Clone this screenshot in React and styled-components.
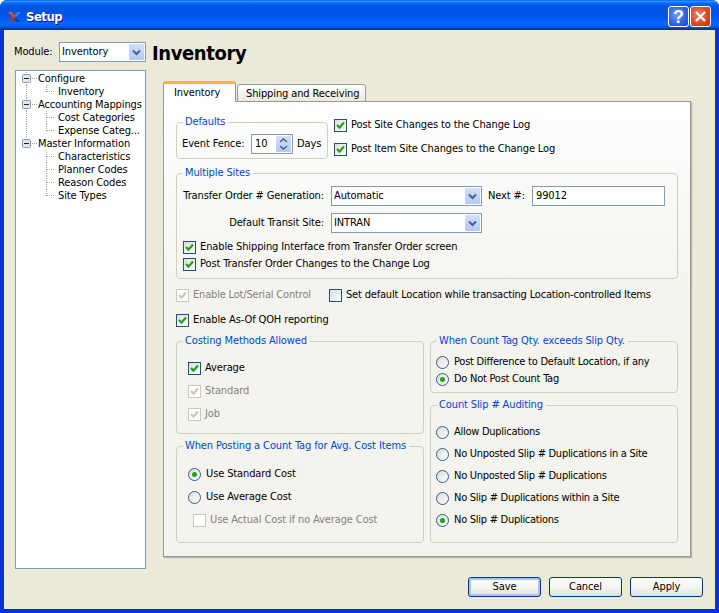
import styled, { createGlobalStyle } from "styled-components";

const GlobalStyle = createGlobalStyle`
	html, body {
		margin: 0;
		padding: 0;
		background: #fff;
	}
	* {
		box-sizing: border-box;
	}
`;

const UI_FONT = `"DejaVu Sans Condensed", "DejaVu Sans", sans-serif`;

// Small drawings
const Chevron = () => (
	<svg width="9" height="7" viewBox="0 0 9 7">
		<path d="M1 1.5 L4.5 5 L8 1.5" fill="none" stroke="#4d6185" strokeWidth="2" />
	</svg>
);

const Tick = ({ color }) => (
	<svg width="11" height="11" viewBox="0 0 11 11">
		<path d="M2 5 L4.5 7.6 L9 2.6" fill="none" stroke={color} strokeWidth="2.2" />
	</svg>
);

const Logo = () => (
	<svg width="13" height="10" viewBox="0 0 13 10">
		<path d="M0 0 H4 L7.5 4.5 L5.5 6 Z" fill="#e0501f" />
		<path d="M0 10 L5 5 L7 6.5 L4 10 Z" fill="#b8321c" />
		<path d="M13 0 H9 L6.5 3.5 L8.5 5 Z" fill="#3f7fd6" />
		<path d="M7.5 5.5 L12.5 10 H8.5 L6 7 Z" fill="#173f94" />
	</svg>
);

const CloseCross = () => (
	<svg width="13" height="13" viewBox="0 0 13 13">
		<path d="M2 2 L11 11 M11 2 L2 11" fill="none" stroke="#fff" strokeWidth="2.2" />
	</svg>
);

const TreeLines = ({ root, parentLast, last, width }) => (
	<svg width={width} height="13" viewBox={`0 0 ${width} 13`}>
		<g stroke="#a9a793" strokeDasharray="1 1" fill="none">
			{!parentLast && <path d="M10.5 0 V13" />}
			{root ? (
				<path d="M16 6.5 H22" />
			) : (
				<path d={`M30.5 0 V${last ? 7 : 13} M31 6.5 H39`} />
			)}
		</g>
		{root && (
			<g>
				<rect x="6.5" y="2.5" width="8" height="8" rx="1" fill="#e4e6ee" stroke="#7f9db9" />
				<path d="M8 6.5 H13" stroke="#222" />
			</g>
		)}
	</svg>
);

// Window frame
const Window = styled.div`
	width: 719px;
	height: 613px;
	overflow: hidden;
	display: flex;
	flex-direction: column;
	font: 11px/14px ${UI_FONT};
	letter-spacing: -0.12px;
	color: #000;
	background: #0831d9;
	border-radius: 7px 7px 0 0;
`;

const TitleBar = styled.div`
	height: 30px;
	flex: none;
	display: flex;
	align-items: center;
	padding: 3px 8px 0 8px;
	background: linear-gradient(
		180deg,
		#0058ee 0%,
		#3593ff 4%,
		#288eff 6%,
		#127dff 8%,
		#036ffc 10%,
		#0262ee 14%,
		#0057e5 20%,
		#0054e3 24%,
		#0055eb 56%,
		#005bf5 66%,
		#026afe 76%,
		#0062ef 86%,
		#0052d6 92%,
		#0040ab 94%,
		#003092 100%
	);
`;

const Title = styled.div`
	margin-left: 5px;
	flex: 1;
	color: #fff;
	font: bold 13px/16px ${UI_FONT};
	letter-spacing: -0.5px;
	text-shadow: 1px 1px 0 #0f1089;
`;

const CaptionButton = styled.div`
	width: 21px;
	height: 21px;
	margin-left: 1px;
	display: flex;
	align-items: center;
	justify-content: center;
	border: 1px solid #fff;
	border-radius: 3px;
	color: #fff;
	font: bold 18px/1 "Liberation Sans", sans-serif;
	background: ${(p) =>
		p.$close
			? "radial-gradient(circle at 40% 40%, #e9866a, #d9481f 60%, #b8300c)"
			: "radial-gradient(circle at 40% 40%, #6f97f5, #2e62e0 60%, #1c45c4)"};
`;

const Client = styled.div`
	flex: 1;
	margin: 0 4px 4px 4px;
	background: #ece9d8;
	display: flex;
	flex-direction: column;
	padding: 12px 12px 0 10px;
`;

const Columns = styled.div`
	display: flex;
	align-items: flex-start;
`;

const LeftColumn = styled.div`
	width: 132px;
	flex: none;
`;

const RightColumn = styled.div`
	margin-left: 6px;
	flex: 1;
`;

const ModuleRow = styled.div`
	display: flex;
	align-items: center;
	justify-content: space-between;
	height: 20px;
`;

const Combo = styled.div`
	width: ${(p) => p.$width}px;
	height: 20px;
	flex: none;
	margin-left: ${(p) => p.$left || 0}px;
	display: flex;
	align-items: center;
	justify-content: space-between;
	padding: 1px 1px 1px 2px;
	background: #fff;
	border: 1px solid #7f9db9;
`;

const ComboArrow = styled.div`
	width: 15px;
	height: 16px;
	display: flex;
	align-items: center;
	justify-content: center;
	border-radius: 1px;
	background: linear-gradient(180deg, #d3dffb, #b4c8f6);
`;

const Tree = styled.div`
	margin: 8px 0 0 1px;
	height: 499px;
	padding-top: 1px;
	background: #fff;
	border: 1px solid #7f9db9;
`;

const TreeRow = styled.div`
	display: flex;
	align-items: center;
	height: 13px;
	white-space: nowrap;
	svg {
		flex: none;
	}
`;

const Heading = styled.h1`
	margin: 0;
	height: 27px;
	font: bold 20px/22px ${UI_FONT};
	letter-spacing: -0.4px;
`;

const TabBar = styled.div`
	margin: 12px 0 -1px 11px;
	display: flex;
	align-items: flex-end;
	position: relative;
`;

const Tab = styled.div`
	height: ${(p) => (p.$active ? 21 : 18)}px;
	width: ${(p) => p.$width}px;
	padding: ${(p) => (p.$active ? "2px 0 0 10px" : "2px 0 0 8px")};
	margin-left: ${(p) => (p.$active ? 0 : 1)}px;
	border: 1px solid #919b9c;
	border-bottom: ${(p) => (p.$active ? 0 : "1px solid #919b9c")};
	border-top: ${(p) => (p.$active ? "3px solid #f5b53e" : "1px solid #919b9c")};
	border-radius: 3px 3px 0 0;
	background: ${(p) => (p.$active ? "#fff" : "linear-gradient(180deg, #fff, #ece9d8)")};
	position: relative;
	z-index: ${(p) => (p.$active ? 2 : 0)};
`;

const TabPanel = styled.div`
	margin-left: 11px;
	width: 528px;
	height: 456px;
	padding: 13px 12px 0 12px;
	border: 1px solid #919b9c;
	box-shadow: 1px 1px 1px #b8b5a5;
	background: linear-gradient(180deg, #fefefe 0%, #f4f3ee 45%, #f4f3ee 100%);
`;

const TopRow = styled.div`
	display: flex;
	gap: 6px;
`;

const CheckColumn = styled.div`
	display: flex;
	flex-direction: column;
	gap: 10px;
	padding-top: 3px;
`;

const GroupBox = styled.fieldset`
	margin: ${(p) => p.$margin || 0};
	padding: 0;
	min-width: 0;
	width: ${(p) => (p.$width ? `${p.$width}px` : "auto")};
	height: ${(p) => p.$height}px;
	border: 1px solid #d0d0bf;
	border-radius: 4px;
	legend {
		margin-left: 6px;
		padding: 0 3px 0 2px;
		color: #0046d5;
		line-height: 14px;
	}
`;

const GroupBody = styled.div`
	padding: ${(p) => p.$padding};
	display: flex;
	flex-direction: column;
	gap: ${(p) => p.$gap || 0}px;
	letter-spacing: ${(p) => p.$tracking || "inherit"};
`;

const Group = ({ title, width, height, margin, padding, gap, tracking, children }) => (
	<GroupBox $width={width} $height={height} $margin={margin}>
		<legend>{title}</legend>
		<GroupBody $padding={padding} $gap={gap} $tracking={tracking}>
			{children}
		</GroupBody>
	</GroupBox>
);

const FieldRow = styled.div`
	display: flex;
	align-items: center;
	height: 20px;
	margin-top: ${(p) => p.$top || 0}px;
`;

const FieldLabel = styled.div`
	width: ${(p) => p.$width}px;
	flex: none;
	margin-left: ${(p) => p.$left || 0}px;
	text-align: ${(p) => p.$align || "left"};
	white-space: nowrap;
`;

const SpinBox = styled.div`
	width: 42px;
	height: 20px;
	margin: 0 4px 0 5px;
	flex: none;
	display: flex;
	align-items: center;
	justify-content: space-between;
	padding: 1px 1px 1px 3px;
	background: #fff;
	border: 1px solid #7f9db9;
`;

const SpinArrows = styled.div`
	width: 15px;
	height: 16px;
	border-radius: 1px;
	display: flex;
	flex-direction: column;
	align-items: center;
	justify-content: center;
	gap: 2px;
	background: linear-gradient(180deg, #d3dffb, #b4c8f6);
`;

const TextInput = styled.div`
	width: 133px;
	height: 20px;
	padding: 2px 3px;
	margin-left: 6px;
	background: #fff;
	border: 1px solid #7f9db9;
`;

const OptionLabel = styled.label`
	display: flex;
	align-items: center;
	height: 14px;
	gap: ${(p) => p.$gap}px;
	margin-left: ${(p) => p.$indent || 0}px;
	white-space: nowrap;
	color: ${(p) => (p.$disabled ? "#838383" : "#000")};
`;

const CheckBox = styled.span`
	width: 13px;
	height: 13px;
	flex: none;
	display: flex;
	align-items: center;
	justify-content: center;
	border: 1px solid ${(p) => (p.$disabled ? "#cac8bb" : "#1c5180")};
	background: ${(p) => (p.$disabled ? "#fff" : "linear-gradient(135deg, #dcdcd7, #fff)")};
`;

const RadioDot = styled.span`
	width: 13px;
	height: 13px;
	flex: none;
	display: flex;
	align-items: center;
	justify-content: center;
	border-radius: 50%;
	border: 1px solid #2c628b;
	background: linear-gradient(135deg, #dcdcd7, #fff);
	&::after {
		content: "";
		width: 5px;
		height: 5px;
		border-radius: 50%;
		background: ${(p) => (p.$on ? "#21a121" : "transparent")};
	}
`;

const Check = ({ label, on, disabled, indent }) => (
	<OptionLabel $gap={4} $disabled={disabled} $indent={indent}>
		<CheckBox $disabled={disabled}>{on && <Tick color={disabled ? "#cac8bb" : "#21a121"} />}</CheckBox>
		{label}
	</OptionLabel>
);

const Radio = ({ label, on }) => (
	<OptionLabel $gap={5}>
		<RadioDot $on={on} />
		{label}
	</OptionLabel>
);

const LooseRow = styled.div`
	display: flex;
	height: 14px;
	margin-top: ${(p) => p.$top}px;
	letter-spacing: ${(p) => p.$tracking || "inherit"};
`;

const LotCell = styled.div`
	width: 153px;
	flex: none;
`;

const BottomGrid = styled.div`
	display: grid;
	grid-template-columns: 248px 248px;
	column-gap: 6px;
	margin-top: 7px;
`;

const Stack = styled.div`
	display: flex;
	flex-direction: column;
	gap: 5px;
`;

const Footer = styled.div`
	display: flex;
	justify-content: flex-end;
	gap: 8px;
	margin-top: 8px;
`;

const Button = styled.div`
	width: 73px;
	height: 20px;
	display: flex;
	align-items: center;
	justify-content: center;
	border: 1px solid #003c74;
	border-radius: 3px;
	background: linear-gradient(180deg, #fff, #f3f3ef 60%, #e0dfd6);
	box-shadow: ${(p) => (p.$default ? "inset 0 0 0 2px #a9c4ee" : "none")};
`;

const treeData = [
	{ name: "Configure", items: ["Inventory"] },
	{ name: "Accounting Mappings", items: ["Cost Categories", "Expense Categ..."] },
	{ name: "Master Information", items: ["Characteristics", "Planner Codes", "Reason Codes", "Site Types"] },
];

const App = () => {
	return (
		<Window>
			<GlobalStyle />
			<TitleBar>
				<Logo />
				<Title>Setup</Title>
				<CaptionButton>?</CaptionButton>
				<CaptionButton $close>
					<CloseCross />
				</CaptionButton>
			</TitleBar>
			<Client>
				<Columns>
					<LeftColumn>
						<ModuleRow>
							Module:
							<Combo $width={87}>
								Inventory
								<ComboArrow>
									<Chevron />
								</ComboArrow>
							</Combo>
						</ModuleRow>
						<Tree>
							{treeData.map((group, g) => {
								const parentLast = g === treeData.length - 1;
								return (
									<div key={group.name}>
										<TreeRow>
											<TreeLines root width={22} parentLast={parentLast} />
											{group.name}
										</TreeRow>
										{group.items.map((item, i) => (
											<TreeRow key={item}>
												<TreeLines
													width={42}
													parentLast={parentLast}
													last={i === group.items.length - 1}
												/>
												{item}
											</TreeRow>
										))}
									</div>
								);
							})}
						</Tree>
					</LeftColumn>
					<RightColumn>
						<Heading>Inventory</Heading>
						<TabBar>
							<Tab $active $width={73}>
								Inventory
							</Tab>
							<Tab $width={129}>Shipping and Receiving</Tab>
						</TabBar>
						<TabPanel>
							<TopRow>
								<Group title="Defaults" width={152} height={44} padding="5px 0 0 5px">
									<FieldRow>
										<FieldLabel $width={64}>Event Fence:</FieldLabel>
										<SpinBox>
											10
											<SpinArrows>
												<svg width="9" height="5" viewBox="0 0 9 5">
													<path d="M1 4 L4.5 1 L8 4" fill="none" stroke="#4d6185" strokeWidth="1.6" />
												</svg>
												<svg width="9" height="5" viewBox="0 0 9 5">
													<path d="M1 1 L4.5 4 L8 1" fill="none" stroke="#4d6185" strokeWidth="1.6" />
												</svg>
											</SpinArrows>
										</SpinBox>
										Days
									</FieldRow>
								</Group>
								<CheckColumn>
									<Check on label="Post Site Changes to the Change Log" />
									<Check on label="Post Item Site Changes to the Change Log" />
								</CheckColumn>
							</TopRow>
							<Group title="Multiple Sites" height={113} margin="7px 0 0" padding="6px 0 0 6px">
								<FieldRow>
									<FieldLabel $width={141} $align="right">
										Transfer Order # Generation:
									</FieldLabel>
									<Combo $width={151} $left={7}>
										Automatic
										<ComboArrow>
											<Chevron />
										</ComboArrow>
									</Combo>
									<FieldLabel $width={38} $left={6}>
										Next #:
									</FieldLabel>
									<TextInput>99012</TextInput>
								</FieldRow>
								<FieldRow $top={7}>
									<FieldLabel $width={141} $align="right">
										Default Transit Site:
									</FieldLabel>
									<Combo $width={151} $left={7}>
										INTRAN
										<ComboArrow>
											<Chevron />
										</ComboArrow>
									</Combo>
								</FieldRow>
								<GroupBody $padding="7px 0 0" $gap={3}>
									<Check on label="Enable Shipping Interface from Transfer Order screen" />
									<Check on label="Post Transfer Order Changes to the Change Log" />
								</GroupBody>
							</Group>
							<LooseRow $top={9} $tracking="-0.18px">
								<LotCell>
									<Check on disabled label="Enable Lot/Serial Control" />
								</LotCell>
								<Check label="Set default Location while transacting Location-controlled Items" />
							</LooseRow>
							<LooseRow $top={11}>
								<Check on label="Enable As-Of QOH reporting" />
							</LooseRow>
							<BottomGrid>
								<Stack>
									<Group title="Costing Methods Allowed" height={100} padding="13px 0 0 11px" gap={9}>
										<Check on label="Average" />
										<Check on disabled label="Standard" />
										<Check on disabled label="Job" />
									</Group>
									<Group
										title="When Posting a Count Tag for Avg. Cost Items"
										height={104}
										padding="14px 0 0 11px"
										gap={9}
									>
										<Radio on label="Use Standard Cost" />
										<Radio label="Use Average Cost" />
										<Check disabled indent={5} label="Use Actual Cost if no Average Cost" />
									</Group>
								</Stack>
								<Stack>
									<Group
										title="When Count Tag Qty. exceeds Slip Qty."
										height={59}
										padding="7px 0 0 5px"
										gap={3}
										tracking="-0.25px"
									>
										<Radio label="Post Difference to Default Location, if any" />
										<Radio on label="Do Not Post Count Tag" />
									</Group>
									<Group
										title="Count Slip # Auditing"
										height={145}
										padding="13px 0 0 5px"
										gap={8}
										tracking="-0.27px"
									>
										<Radio label="Allow Duplications" />
										<Radio label="No Unposted Slip # Duplications in a Site" />
										<Radio label="No Unposted Slip # Duplications" />
										<Radio label="No Slip # Duplications within a Site" />
										<Radio on label="No Slip # Duplications" />
									</Group>
								</Stack>
							</BottomGrid>
						</TabPanel>
					</RightColumn>
				</Columns>
				<Footer>
					<Button $default>Save</Button>
					<Button>Cancel</Button>
					<Button>Apply</Button>
				</Footer>
			</Client>
		</Window>
	);
};

export default App;
